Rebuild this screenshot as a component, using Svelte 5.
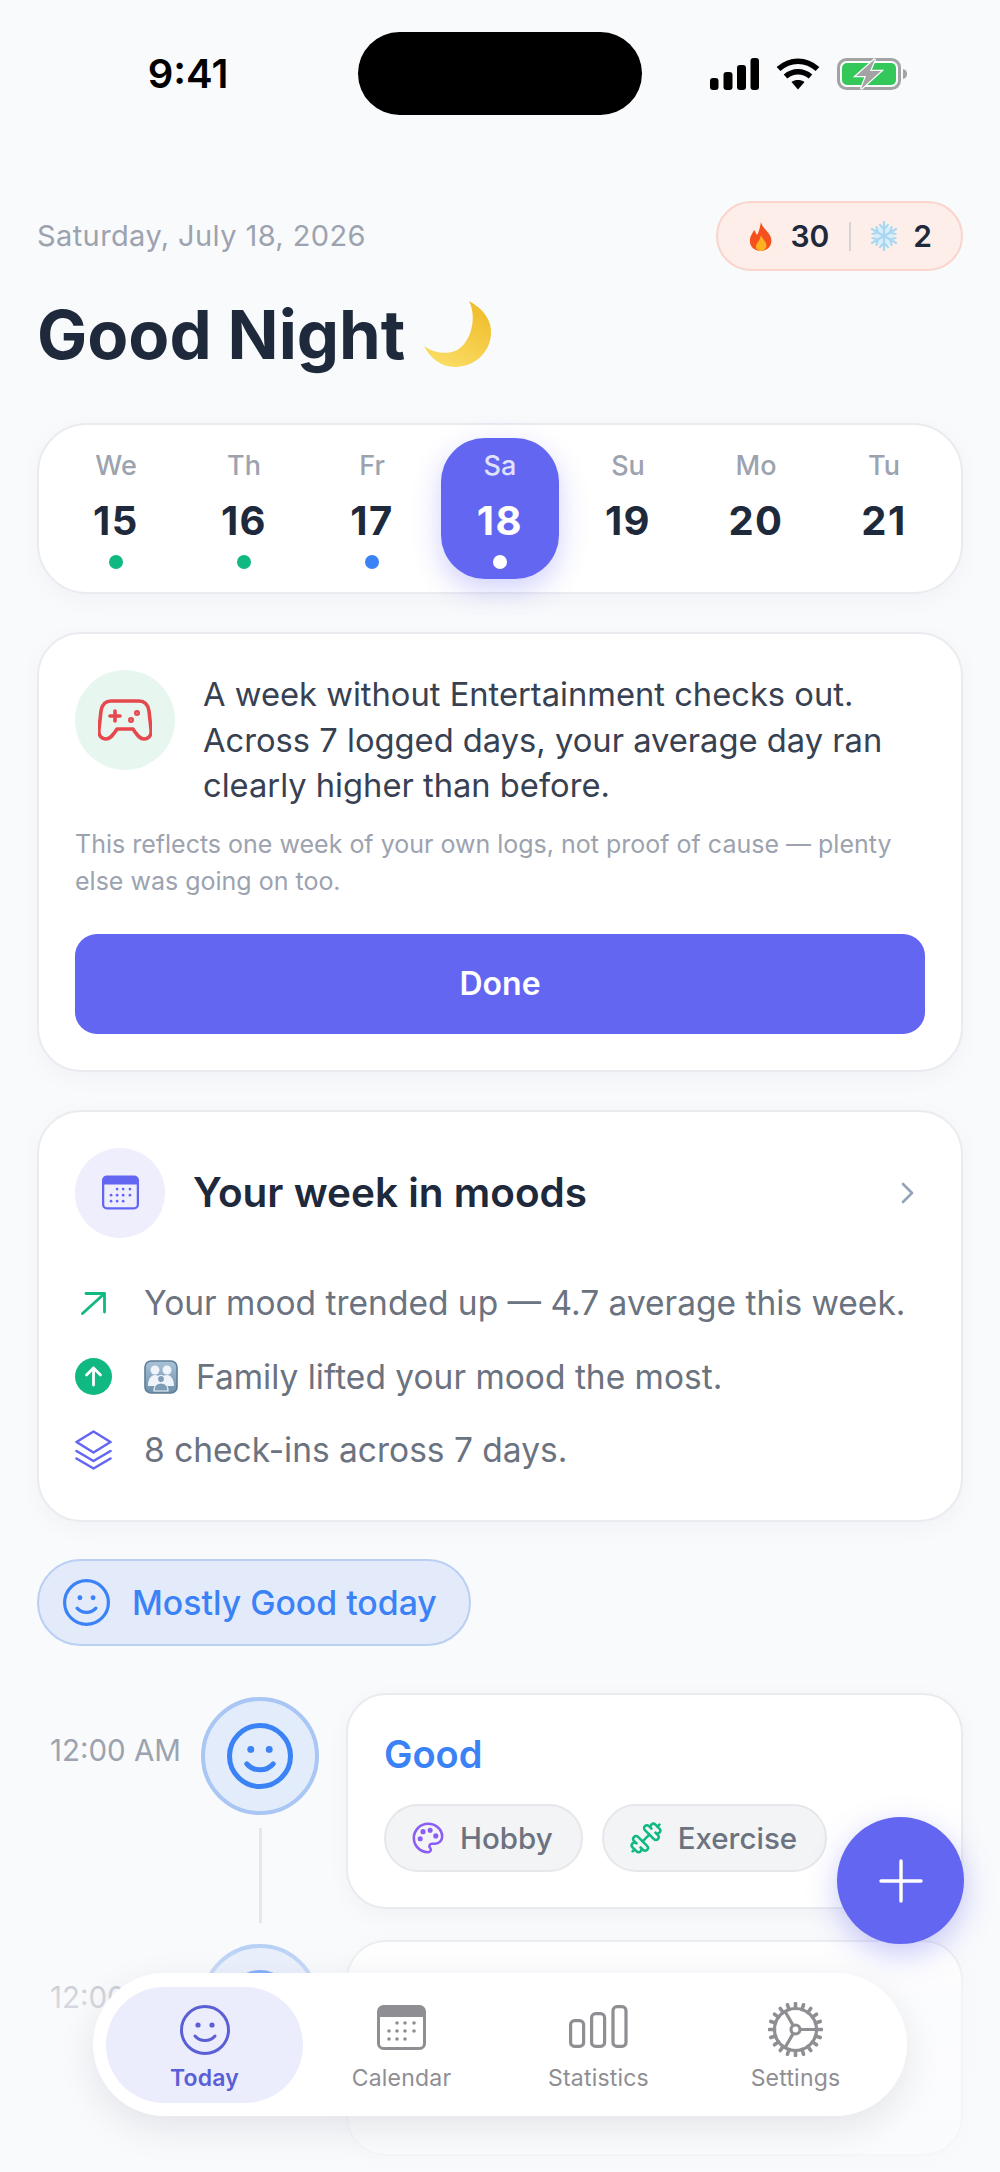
<script>
	const days = [
		{ label: "We", num: 15, dot: "#10b981" },
		{ label: "Th", num: 16, dot: "#10b981" },
		{ label: "Fr", num: 17, dot: "#3b82f6" },
		{ label: "Sa", num: 18, dot: "#ffffff", active: true },
		{ label: "Su", num: 19 },
		{ label: "Mo", num: 20 },
		{ label: "Tu", num: 21 }
	];

	const spokes = [0, 60, 120];
	const teeth = Array.from({ length: 20 }, (_, i) => i * 18);
	const calDots = [
		[20, 18], [28, 18], [37, 18],
		[12, 26], [20, 26], [28, 26], [37, 26],
		[12, 34], [20, 34], [28, 34]
	];
</script>

{#snippet face(size, width)}
	<svg class="face" style="width: {size}px; height: {size}px" viewBox="0 0 50 50" fill="none" stroke="currentColor">
		<circle cx="25" cy="25" r={25 - width / 2} stroke-width={width} />
		<circle cx="18" cy="20" r="2.6" fill="currentColor" stroke="none" />
		<circle cx="32" cy="20" r="2.6" fill="currentColor" stroke="none" />
		<path d="M15 31c5 6 15 6 20 0" stroke-width={width} stroke-linecap="round" />
	</svg>
{/snippet}

{#snippet calendar(w, h, color)}
	<svg style="width: {w}px; height: {h}px" viewBox="0 0 49 45" fill="none">
		<rect x="1.5" y="1.5" width="46" height="42" rx="5" stroke={color} stroke-width="3" />
		<path d="M1 6a5 5 0 0 1 5-5h37a5 5 0 0 1 5 5v6H1z" fill={color} />
		{#each calDots as [x, y]}
			<circle cx={x} cy={y} r="1.8" fill={color} />
		{/each}
	</svg>
{/snippet}

<div class="screen">
	<div class="status">
		<span class="clock">9:41</span>
		<div class="island"></div>
		<div class="status-icons">
			<svg class="signal" viewBox="0 0 49 32" fill="#000">
				<rect x="0" y="20" width="8.5" height="12" rx="3" />
				<rect x="13.5" y="14" width="9" height="18" rx="3" />
				<rect x="27" y="7" width="9" height="25" rx="3" />
				<rect x="40.5" y="0" width="8.5" height="32" rx="3" />
			</svg>
			<svg class="wifi" viewBox="0 0 44 32" fill="none" stroke="#000" stroke-width="5.5">
				<path d="M2.5 11C14 .5 30 .5 41.5 11" />
				<path d="M9.5 18.5c7.5-6.5 17.5-6.5 25 0" />
				<path d="M15.5 24c4-2.600 9-2.600 13 0L22 31.500z" fill="#000" stroke="none" />
			</svg>
			<svg class="battery" viewBox="0 0 70 32" fill="none">
				<rect x="1.500" y="1.500" width="61" height="29" rx="8" stroke="#a3a3a3" stroke-width="3" />
				<rect x="5" y="5" width="54" height="22" rx="5" fill="#34c759" />
				<path d="M66 11c3 .5 4 2.500 4 5s-1 4.500-4 5z" fill="#a3a3a3" />
				<path d="M38 1 19 18h10l-5 13 20-18H33z" fill="#a3a3a3" stroke="#f9fafc" stroke-width="2.500" paint-order="stroke" />
			</svg>
		</div>
	</div>

	<div class="content">
		<header class="top">
			<span class="date">Saturday, July 18, 2026</span>
			<div class="streak">
				<svg class="flame" viewBox="0 0 24 29">
					<path d="M12 0c1 6 8 9 10 16 2 8-4 13-10 13C5 29 0 24 1 17c.5-4 3-6 4-9 2 2 2 4 3 5 2-3 3-8 4-13z" fill="#f4511e" />
					<path d="M12 13c1 4 6 7 5.500 11-.5 3-3 5-5.500 5-3 0-5.500-2-5-5 .5-3 4-5 5-11z" fill="#fdb022" />
				</svg>
				<b>30</b>
				<i class="divider"></i>
				<svg class="flake" viewBox="0 0 30 30" fill="none" stroke="#a9d8f0" stroke-width="2.200" stroke-linecap="round">
					<circle cx="15" cy="15" r="10" fill="#d8eefa" stroke="none" />
					{#each spokes as a}
						<g transform="rotate({a} 15 15)">
							<path d="M15 1v28M11 4l4 4 4-4M11 26l4-4 4 4" />
						</g>
					{/each}
				</svg>
				<b>2</b>
			</div>
		</header>

		<h1>
			Good Night
			<svg class="moon" viewBox="0 0 68 66">
				<defs>
					<linearGradient id="moonFill" x1="0.8" y1="0" x2="0.3" y2="1">
						<stop offset="0" stop-color="#efbb28" />
						<stop offset="1" stop-color="#fbdc64" />
					</linearGradient>
				</defs>
				<path d="M45 0c15 8 23 20 22 33-1 19-17 33-36 33C17 66 6 57 0 45c8 6 20 9 31 5C46 44 54 18 45 0z" fill="url(#moonFill)" />
			</svg>
		</h1>

		<section class="card week">
			{#each days as day}
				<div class="day" class:active={day.active}>
					<span class="day-label">{day.label}</span>
					<span class="day-num">{day.num}</span>
					{#if day.dot}<i class="dot" style="background: {day.dot}"></i>{/if}
				</div>
			{/each}
		</section>

		<section class="card insight">
			<div class="insight-row">
				<div class="round game">
					<svg viewBox="0 0 54 42" fill="none" stroke="#e5484d" stroke-width="3.600" stroke-linecap="round" stroke-linejoin="round">
						<path d="M13 2h28c6 0 9 4 10 10l2 18c1 7-3 10-7 10s-6-3-9-7l-2-3H19l-2 3c-3 4-5 7-9 7s-8-3-7-10l2-18C4 6 7 2 13 2z" />
						<path d="M17 12v10M12 17h10" />
						<circle cx="33" cy="21" r="1.200" />
						<circle cx="39" cy="14" r="1.200" />
					</svg>
				</div>
				<p class="insight-text">A week without Entertainment checks out. Across 7 logged days, your average day ran clearly higher than before.</p>
			</div>
			<p class="note">This reflects one week of your own logs, not proof of cause — plenty else was going on too.</p>
			<div class="done">Done</div>
		</section>

		<section class="card moods">
			<div class="moods-head">
				<div class="round cal">{@render calendar(37, 35, "#6366f1")}</div>
				<h2>Your week in moods</h2>
				<svg class="chevron" viewBox="0 0 16 24" fill="none" stroke="#94a3b8" stroke-width="2.600" stroke-linecap="round" stroke-linejoin="round">
					<path d="M3 3l9 9-9 9" />
				</svg>
			</div>
			<div class="mood-row">
				<span class="row-icon">
					<svg class="trend" viewBox="0 0 25 23" fill="none" stroke="#10b981" stroke-width="2.800" stroke-linecap="round" stroke-linejoin="round">
						<path d="M1.500 21.500 23.500 1.500M5 1.500h18.500V20" />
					</svg>
				</span>
				<span>Your mood trended up — 4.7 average this week.</span>
			</div>
			<div class="mood-row">
				<span class="row-icon">
					<svg viewBox="0 0 37 37" width="37" height="37">
						<circle cx="18.500" cy="18.500" r="18.500" fill="#10b981" />
						<path d="M18.500 27V10M11.500 17l7-7 7 7" fill="none" stroke="#fff" stroke-width="2.800" stroke-linecap="round" stroke-linejoin="round" />
					</svg>
				</span>
				<svg class="family" viewBox="0 0 34 34">
					<defs>
						<linearGradient id="famFill" x1="0" y1="0" x2="0" y2="1">
							<stop offset="0" stop-color="#a9c2d8" />
							<stop offset="1" stop-color="#6f90ab" />
						</linearGradient>
					</defs>
					<rect x="1" y="1" width="32" height="32" rx="6" fill="url(#famFill)" stroke="#5f7d96" stroke-width="1.600" />
					<g fill="#eef4f9">
						<circle cx="11" cy="10" r="4.500" />
						<circle cx="23" cy="10" r="4.500" />
						<path d="M4 26c0-7 3-11 7-11s5 3 6 3 2-3 6-3 7 4 7 11z" />
					</g>
					<circle cx="17" cy="19" r="3.500" fill="#7f9db6" stroke="#eef4f9" stroke-width="1.200" />
					<path d="M10 31c0-5 3-8 7-8s7 3 7 8z" fill="#7f9db6" stroke="#eef4f9" stroke-width="1.200" />
				</svg>
				<span class="family-text">Family lifted your mood the most.</span>
			</div>
			<div class="mood-row">
				<span class="row-icon">
					<svg viewBox="0 0 37 40" width="37" height="40" fill="none" stroke="#6366f1" stroke-width="2.600" stroke-linecap="round" stroke-linejoin="round">
						<path d="M18.500 1.500 35.500 12 18.500 22.500 1.500 12z" />
						<path d="M1.500 21 18.500 31 35.500 21" />
						<path d="M1.500 28.500 18.500 38.500 35.500 28.500" />
					</svg>
				</span>
				<span>8 check-ins across 7 days.</span>
			</div>
		</section>

		<div class="mostly">
			{@render face(47, 3.400)}
			<span>Mostly Good today</span>
		</div>

		<div class="timeline">
			<div class="entry">
				<span class="time">12:00 AM</span>
				<div class="rail">
					<div class="mood-circle">{@render face(66, 3.800)}</div>
					<i class="line"></i>
				</div>
				<div class="card entry-card">
					<h3>Good</h3>
					<div class="chips">
						<span class="chip">
							<svg viewBox="0 0 24 24" fill="none" stroke="#8b5cf6" stroke-width="1.800" stroke-linecap="round" stroke-linejoin="round">
								<path d="M12 22a1 1 0 0 1 0-20 10 9 0 0 1 10 9 5 5 0 0 1-5 5h-2.250a1.750 1.750 0 0 0-1.400 2.800l.3.400a1.750 1.750 0 0 1-1.400 2.800z" />
								<circle cx="13.500" cy="6.500" r=".9" fill="#8b5cf6" />
								<circle cx="17.500" cy="10.500" r=".9" fill="#8b5cf6" />
								<circle cx="6.500" cy="12.500" r=".9" fill="#8b5cf6" />
								<circle cx="8.500" cy="7.500" r=".9" fill="#8b5cf6" />
							</svg>
							Hobby
						</span>
						<span class="chip">
							<svg viewBox="0 0 24 24" fill="none" stroke="#10b981" stroke-width="1.800" stroke-linecap="round" stroke-linejoin="round">
								<path d="M17.596 12.768a2 2 0 1 0 2.829-2.829l-1.768-1.767a2 2 0 0 0 2.828-2.829l-2.828-2.828a2 2 0 0 0-2.829 2.828l-1.767-1.768a2 2 0 1 0-2.829 2.829z" />
								<path d="m2.500 21.500 1.400-1.400" />
								<path d="m20.100 3.900 1.400-1.400" />
								<path d="M5.343 21.485a2 2 0 1 0 2.829-2.828l1.767 1.768a2 2 0 1 0 2.829-2.829l-6.364-6.364a2 2 0 1 0-2.829 2.829l1.768 1.767a2 2 0 0 0-2.828 2.829z" />
								<path d="m9.600 14.400 4.800-4.800" />
							</svg>
							Exercise
						</span>
					</div>
				</div>
			</div>
			<div class="entry">
				<span class="time">12:00 AM</span>
				<div class="rail">
					<div class="mood-circle">{@render face(66, 3.800)}</div>
				</div>
				<div class="card entry-card"></div>
			</div>
		</div>
	</div>

	<div class="fade"></div>

	<div class="fab">
		<svg viewBox="0 0 44 44" width="44" height="44" stroke="#fff" stroke-width="3.400" stroke-linecap="round">
			<path d="M22 2v40M2 22h40" />
		</svg>
	</div>

	<nav class="tabs">
		<div class="tab current">
			{@render face(50, 3)}
			<span>Today</span>
		</div>
		<div class="tab">
			{@render calendar(49, 45, "#8e8e93")}
			<span>Calendar</span>
		</div>
		<div class="tab">
			<svg class="tab-icon" viewBox="0 0 59 43" fill="none" stroke="#8e8e93" stroke-width="3.200">
				<rect x="1.600" y="15.600" width="13" height="25.800" rx="4" />
				<rect x="22.600" y="8.600" width="13" height="32.800" rx="4" />
				<rect x="44" y="1.600" width="13" height="39.800" rx="4" />
			</svg>
			<span>Statistics</span>
		</div>
		<div class="tab">
			<svg class="tab-icon" viewBox="0 0 55 55" fill="none" stroke="#8e8e93" stroke-width="3.200">
				<circle cx="27.500" cy="27.500" r="21" />
				{#each teeth as a}
					<path d="M27.500 1.500v5" stroke-width="3.600" stroke-linecap="round" transform="rotate({a} 27.500 27.500)" />
				{/each}
				<circle cx="27.500" cy="27.500" r="4.500" />
				<path d="M32 27.500h16.500M25.200 23.600 17 9.300M25.200 31.400 17 45.700" />
			</svg>
			<span>Settings</span>
		</div>
	</nav>
</div>

<style>
	:global(body) {
		background: #f9fafc;
	}
	.screen {
		position: relative;
		height: 2172px;
		overflow: hidden;
		background: #f9fafc;
		font-family: Inter, "Liberation Sans", sans-serif;
		color: #1e293b;
	}
	.status {
		display: grid;
		grid-template-columns: 358px 284px 1fr;
		padding-top: 32px;
		align-items: center;
	}
	.clock {
		padding-left: 18px;
		text-align: center;
		font-size: 40px;
		font-weight: 600;
		color: #000;
		margin-top: -1px;
	}
	.island {
		height: 83px;
		border-radius: 42px;
		background: #000;
	}
	.status-icons {
		display: flex;
		align-items: center;
		padding-left: 68px;
		gap: 17px;
	}
	.signal {
		width: 49px;
		height: 32px;
	}
	.wifi {
		width: 44px;
		height: 32px;
	}
	.battery {
		width: 70px;
		height: 32px;
	}
	.content {
		padding: 86px 37px 0;
	}
	.top {
		display: flex;
		justify-content: space-between;
		align-items: center;
	}
	.date {
		margin-top: -2px;
		font-size: 29px;
		color: #9ca3af;
		letter-spacing: 0.4px;
	}
	.streak {
		box-sizing: border-box;
		display: flex;
		align-items: center;
		height: 70px;
		padding: 0 29px 0 31px;
		border: 2px solid #f9d5cc;
		border-radius: 35px;
		background: #fdeeea;
		font-size: 30px;
	}
	.streak b {
		font-weight: 600;
	}
	.flame {
		width: 24px;
		height: 29px;
		margin-right: 17px;
	}
	.divider {
		width: 2px;
		height: 29px;
		margin: 0 18px 0 20px;
		background: #d8d4d4;
	}
	.flake {
		width: 30px;
		height: 30px;
		margin-right: 14px;
	}
	h1 {
		display: flex;
		align-items: center;
		gap: 19px;
		height: 78px;
		margin: 25px 0 49px;
		font-size: 67px;
		font-weight: 700;
		line-height: 78px;
	}
	.moon {
		width: 68px;
		height: 66px;
		margin-top: -2px;
	}
	.card {
		box-sizing: border-box;
		border: 2px solid #e9ebef;
		border-radius: 44px;
		background: #fff;
		box-shadow: 0 6px 24px rgba(30, 41, 59, 0.035);
	}
	.week {
		display: grid;
		grid-template-columns: repeat(7, 1fr);
		height: 171px;
		padding: 13px 13px 12px;
		border-radius: 50px;
		margin-bottom: 38px;
	}
	.day {
		display: flex;
		flex-direction: column;
		align-items: center;
		width: 118px;
		height: 141px;
		justify-self: center;
		padding-top: 10px;
		box-sizing: border-box;
		border-radius: 44px;
	}
	.day.active {
		background: #6366f1;
		box-shadow: 0 10px 28px rgba(99, 102, 241, 0.3);
	}
	.day-label {
		font-size: 27px;
		line-height: 36px;
		font-weight: 500;
		color: #9ca3af;
	}
	.day-num {
		margin-top: 12px;
		font-size: 40px;
		line-height: 50px;
		font-weight: 650;
		letter-spacing: 1.500px;
	}
	.active .day-label {
		color: #e0e1fc;
	}
	.active .day-num {
		color: #fff;
	}
	.dot {
		width: 14px;
		height: 14px;
		margin-top: 9px;
		border-radius: 50%;
	}
	.insight {
		padding: 36px;
		margin-bottom: 38px;
	}
	.insight-row {
		display: flex;
		gap: 28px;
		align-items: flex-start;
	}
	.round {
		display: flex;
		flex: none;
		align-items: center;
		justify-content: center;
		border-radius: 50%;
	}
	.game {
		width: 100px;
		height: 100px;
		background: #e8f6f0;
	}
	.game svg {
		width: 54px;
		height: 42px;
	}
	.insight-text {
		margin: 2px 0 0;
		font-size: 32.700px;
		line-height: 45.500px;
		color: #374151;
	}
	.note {
		margin: 17px 0 34px;
		font-size: 25px;
		line-height: 37px;
		color: #9ca3af;
	}
	.done {
		height: 100px;
		border-radius: 22px;
		background: #6366f1;
		color: #fff;
		font-size: 32px;
		font-weight: 600;
		line-height: 100px;
		text-align: center;
	}
	.moods {
		display: flex;
		flex-direction: column;
		gap: 29.500px;
		height: 412px;
		padding: 36px;
		margin-bottom: 37px;
	}
	.moods-head {
		display: flex;
		align-items: center;
		gap: 28px;
		margin-bottom: 14px;
	}
	.cal {
		width: 90px;
		height: 90px;
		background: #eeeefd;
	}
	h2 {
		flex: 1;
		margin: 0;
		font-size: 40.500px;
		font-weight: 600;
	}
	.chevron {
		width: 16px;
		height: 24px;
		margin-right: 9px;
	}
	.mood-row {
		display: flex;
		align-items: center;
		height: 44px;
		font-size: 33.500px;
		color: #6b7280;
		white-space: nowrap;
	}
	.row-icon {
		display: flex;
		flex: none;
		justify-content: center;
		width: 37px;
		margin-right: 32px;
	}
	.trend {
		width: 25px;
		height: 23px;
	}
	.family {
		width: 34px;
		height: 34px;
		flex: none;
	}
	.family-text {
		margin-left: 18px;
	}
	.mostly {
		box-sizing: border-box;
		display: inline-flex;
		align-items: center;
		gap: 22px;
		height: 87px;
		padding: 0 32px 0 24px;
		border: 2px solid #b9cff3;
		border-radius: 44px;
		background: #e3eafa;
		color: #3b82f6;
		font-size: 33.800px;
		font-weight: 500;
		vertical-align: top;
	}
	.timeline {
		display: flex;
		flex-direction: column;
		gap: 31px;
		margin-top: 47px;
	}
	.entry {
		display: grid;
		grid-template-columns: 144px 118px 1fr;
		column-gap: 20px;
	}
	.entry > .entry-card {
		margin-left: 7px;
		height: 216px;
		border-radius: 40px;
		padding: 35px 0 0 36px;
	}
	.time {
		margin-top: 41px;
		font-size: 29.500px;
		line-height: 32px;
		color: #9ca3af;
		text-align: right;
		white-space: nowrap;
	}
	.rail {
		display: flex;
		flex-direction: column;
		align-items: center;
		height: 216px;
		box-sizing: border-box;
		padding-top: 4px;
	}
	.mood-circle {
		box-sizing: border-box;
		display: flex;
		flex: none;
		align-items: center;
		justify-content: center;
		width: 118px;
		height: 118px;
		border: 4px solid #a9c6f5;
		border-radius: 50%;
		background: #e3ecfb;
		color: #3b82f6;
	}
	.line {
		flex: none;
		width: 3px;
		height: 95px;
		margin-top: 13px;
		background: #e5e7eb;
	}
	h3 {
		margin: 0;
		font-size: 38px;
		line-height: 48px;
		font-weight: 600;
		color: #3b82f6;
	}
	.chips {
		display: flex;
		gap: 19px;
		margin-top: 26px;
	}
	.chip {
		box-sizing: border-box;
		display: flex;
		align-items: center;
		gap: 15px;
		height: 68px;
		padding: 0 28px 0 25px;
		border: 2px solid #e5e7eb;
		border-radius: 34px;
		background: #f3f4f6;
		color: #6b7280;
		font-size: 29.500px;
		font-weight: 500;
	}
	.chip svg {
		width: 34px;
		height: 34px;
	}
	.fade {
		position: absolute;
		left: 0;
		right: 0;
		bottom: 0;
		height: 250px;
		background: linear-gradient(rgba(249, 250, 252, 0), rgba(249, 250, 252, 0.6) 30%, rgba(249, 250, 252, 0.75));
	}
	.fab {
		position: absolute;
		left: 837px;
		top: 1817px;
		display: flex;
		align-items: center;
		justify-content: center;
		width: 127px;
		height: 127px;
		border-radius: 50%;
		background: #6366f1;
		box-shadow: 0 10px 30px rgba(99, 102, 241, 0.35);
	}
	.tabs {
		position: absolute;
		left: 93px;
		top: 1973px;
		box-sizing: border-box;
		display: grid;
		grid-template-columns: repeat(4, 197px);
		width: 814px;
		height: 143px;
		padding: 14px 13px 13px;
		border-radius: 72px;
		background: #fff;
		box-shadow: 0 12px 36px rgba(30, 41, 59, 0.1);
	}
	.tab {
		display: flex;
		flex-direction: column;
		align-items: center;
		height: 116px;
		border-radius: 58px;
		color: #8e8e93;
		font-size: 23px;
		font-weight: 400;
		letter-spacing: 0.2px;
		justify-content: flex-start;
	}
	.tab > :global(svg) {
		flex: none;
		margin: 18px 0 10px;
	}
	.tab span {
		position: absolute;
		top: 89px;
		line-height: 32px;
	}
	.tab-icon {
		width: 59px;
		height: 43px;
	}
	.tab:last-child .tab-icon {
		width: 55px;
		height: 55px;
		margin-top: 15px;
	}
	.current {
		background: #ecedfc;
		color: #5b5fd6;
		font-weight: 600;
	}
</style>
